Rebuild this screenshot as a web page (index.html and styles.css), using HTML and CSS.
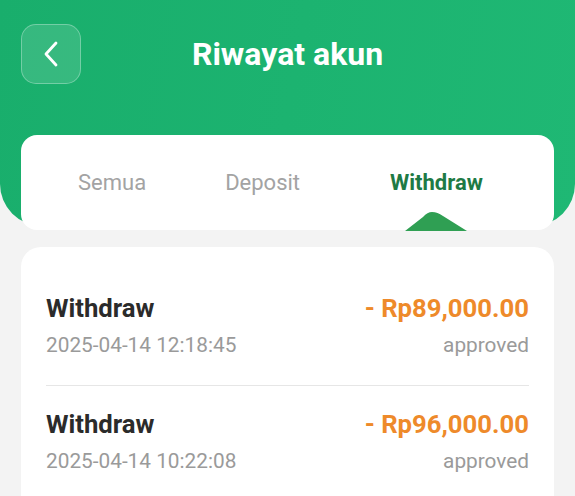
FILE: index.html
```html
<!DOCTYPE html>
<html lang="id">
<head>
  <meta charset="UTF-8">
  <meta name="viewport" content="width=device-width, initial-scale=1.0">
  <title>Riwayat akun</title>
  <link rel="stylesheet" href="styles.css">
</head>
<body>
  <!-- Cabecera verde -->
  <header class="hero">
    <div class="topbar">
      <button class="back" aria-label="Kembali">
        <svg width="22" height="26" viewBox="0 0 22 26">
          <path d="M16 2 L6 13 L16 24" fill="none" stroke="#fff" stroke-width="2.8" stroke-linecap="round" stroke-linejoin="round"/>
        </svg>
      </button>
      <h1>Riwayat akun</h1>
    </div>
  </header>

  <!-- Pestañas -->
  <nav class="tabs">
    <span class="tab">Semua</span>
    <span class="tab">Deposit</span>
    <span class="tab active">
      Withdraw
      <svg class="bump" width="62" height="19" viewBox="0 0 62 19">
        <path d="M0 19 L18 5 C21 1.5 24 0 27 0 C31 0 34 1.5 38 4 L62 19 Z" fill="#2f9f53"/>
      </svg>
    </span>
  </nav>

  <!-- Lista de movimientos -->
  <section class="list">
    <div class="row">
      <div class="col">
        <div class="name">Withdraw</div>
        <div class="date">2025-04-14 12:18:45</div>
      </div>
      <div class="col right">
        <div class="amount">- Rp89,000.00</div>
        <div class="status">approved</div>
      </div>
    </div>
    <div class="row">
      <div class="col">
        <div class="name">Withdraw</div>
        <div class="date">2025-04-14 10:22:08</div>
      </div>
      <div class="col right">
        <div class="amount">- Rp96,000.00</div>
        <div class="status">approved</div>
      </div>
    </div>
  </section>
</body>
</html>
```

FILE: styles.css
```css
body {
  margin: 0;
  padding: 0;
  font-family: Roboto, "Noto Sans", sans-serif;
  background: #f3f3f3; /* fondo gris claro */
  overflow: hidden;
}
.hero {
  height: 226px;
  background: linear-gradient(100deg, #19ae6c, #1fb874);
  border-radius: 0 0 42px 42px;
  padding: 24px 21px 0;
  box-sizing: border-box;
}
.topbar {
  display: flex;
  align-items: center;
}
.back {
  width: 60px;
  height: 60px;
  border-radius: 15px;
  background: rgba(255, 255, 255, 0.13);
  border: 1px solid rgba(255, 255, 255, 0.3);
  display: flex;
  align-items: center;
  justify-content: center;
  padding: 0;
}
.topbar h1 {
  flex: 1;
  margin: 0 60px 0 0;
  text-align: center;
  color: #fff;
  font-size: 32px;
  font-weight: 700;
  line-height: 56px;
}
.tabs {
  margin: -91px 21px 0;
  height: 95px;
  background: #fff;
  border-radius: 16px;
  display: flex;
  align-items: flex-start;
  padding: 0 0 0 57px;
  gap: 79px;
  box-sizing: border-box;
}
.tab {
  position: relative;
  font-size: 22px;
  color: #a3a3a3;
  line-height: 26px;
  margin-top: 35px;
}
.tab.active {
  color: #1e7a45;
  font-weight: 700;
  margin-left: 11px;
}
.bump {
  position: absolute;
  left: 15px;
  top: 42px;
}
.list {
  margin: 17px 21px 0;
  background: #fff;
  border-radius: 20px 20px 0 0;
  padding: 23px 25px 40px;
}
.row {
  display: flex;
  justify-content: space-between;
  padding: 23px 0 27px;
  border-bottom: 1px solid #e6e6e6;
}
.row:last-child {
  border-bottom: none;
}
.col.right {
  text-align: right;
}
.name,
.amount {
  font-size: 25.7px;
  font-weight: 700;
  line-height: 30px;
}
.name {
  color: #2b2b2b;
}
.amount {
  color: #ee8a2a; /* naranja */
}
.date,
.status {
  font-size: 20.8px;
  color: #9a9a9a;
  line-height: 26px;
  margin-top: 9px;
}
```
